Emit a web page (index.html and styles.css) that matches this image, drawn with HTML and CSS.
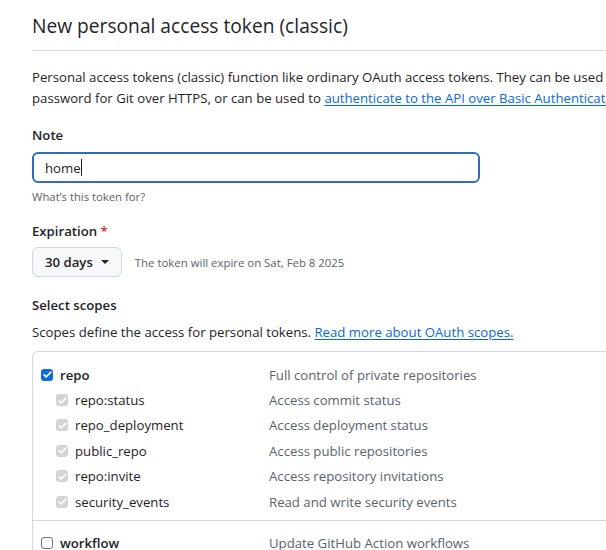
FILE: index.html
```html
<!DOCTYPE html>
<html>
<head>
<meta charset="utf-8">
<link rel="stylesheet" href="styles.css">
</head>
<body>
<div class="page">
  <div class="head">
    <h1 class="title">New personal access token (classic)</h1>
  </div>
  <p class="intro">Personal access tokens (classic) function like ordinary OAuth access tokens. They can be used instead of a<br>password for Git over HTTPS, or can be used to <a href="#" class="link">authenticate to the API over Basic Authentication</a>.</p>

  <div class="field">
    <div class="label">Note</div>
    <div class="input"><span class="value">home</span><span class="caret"></span></div>
    <div class="hint">What’s this token for?</div>
  </div>

  <div class="field">
    <div class="label">Expiration <span class="req">*</span></div>
    <div class="exp-row">
      <button class="btn">30 days <span class="tri"></span></button>
      <span class="exp-note">The token will expire on Sat, Feb 8 2025</span>
    </div>
  </div>

  <div class="label scopes-title">Select scopes</div>
  <p class="scopes-desc">Scopes define the access for personal tokens. <a href="#" class="link">Read more about OAuth scopes.</a></p>

  <div class="scopes">
    <div class="group">
      <div class="row main">
        <span class="cb cb-on"><svg viewBox="0 0 16 16" width="11" height="11"><path d="M3 8.5l3 3 7-7" fill="none" stroke="#fff" stroke-width="2.2" stroke-linecap="round" stroke-linejoin="round"/></svg></span>
        <span class="name">repo</span>
        <span class="desc">Full control of private repositories</span>
      </div>
      <div class="row sub">
        <span class="cb cb-dis"><svg viewBox="0 0 16 16" width="11" height="11"><path d="M3 8.5l3 3 7-7" fill="none" stroke="#fff" stroke-width="2.2" stroke-linecap="round" stroke-linejoin="round"/></svg></span>
        <span class="name">repo:status</span>
        <span class="desc">Access commit status</span>
      </div>
      <div class="row sub">
        <span class="cb cb-dis"><svg viewBox="0 0 16 16" width="11" height="11"><path d="M3 8.5l3 3 7-7" fill="none" stroke="#fff" stroke-width="2.2" stroke-linecap="round" stroke-linejoin="round"/></svg></span>
        <span class="name">repo_deployment</span>
        <span class="desc">Access deployment status</span>
      </div>
      <div class="row sub">
        <span class="cb cb-dis"><svg viewBox="0 0 16 16" width="11" height="11"><path d="M3 8.5l3 3 7-7" fill="none" stroke="#fff" stroke-width="2.2" stroke-linecap="round" stroke-linejoin="round"/></svg></span>
        <span class="name">public_repo</span>
        <span class="desc">Access public repositories</span>
      </div>
      <div class="row sub">
        <span class="cb cb-dis"><svg viewBox="0 0 16 16" width="11" height="11"><path d="M3 8.5l3 3 7-7" fill="none" stroke="#fff" stroke-width="2.2" stroke-linecap="round" stroke-linejoin="round"/></svg></span>
        <span class="name">repo:invite</span>
        <span class="desc">Access repository invitations</span>
      </div>
      <div class="row sub">
        <span class="cb cb-dis"><svg viewBox="0 0 16 16" width="11" height="11"><path d="M3 8.5l3 3 7-7" fill="none" stroke="#fff" stroke-width="2.2" stroke-linecap="round" stroke-linejoin="round"/></svg></span>
        <span class="name">security_events</span>
        <span class="desc">Read and write security events</span>
      </div>
    </div>
    <div class="group">
      <div class="row main">
        <span class="cb cb-off"></span>
        <span class="name">workflow</span>
        <span class="desc">Update GitHub Action workflows</span>
      </div>
    </div>
  </div>
</div>
</body>
</html>
```

FILE: styles.css
```css
html, body {
  margin: 0;
  padding: 0;
  background: #fff;
  overflow: hidden;
}
body {
  font-family: "Open Sans", "Noto Sans", sans-serif;
  font-size: 13.2px;
  color: #1f2328;
}
.page {
  width: 900px;
  padding-left: 32px;
}
.head {
  padding-top: 8px;
  border-bottom: 1px solid #d8dee4;
}
.title {
  margin: 0;
  font-size: 19.2px;
  font-weight: 400;
  line-height: 36px;
  padding-bottom: 6px;
}
.intro {
  margin: 16px 0 0;
  line-height: 21px;
  white-space: nowrap;
}
.link {
  color: #0969da;
  text-decoration: underline;
  text-underline-offset: 2px;
}
.field {
  margin-top: 16px;
}
.label {
  font-weight: 600;
  line-height: 20px;
}
.req {
  color: #d1242f;
}
.input {
  margin-top: 7px;
  width: 433px;
  height: 27px;
  border: 2px solid #2f6dbb;
  border-radius: 6px;
  display: flex;
  align-items: center;
  padding-left: 11px;
  box-sizing: content-box;
}
.caret {
  display: inline-block;
  width: 1px;
  height: 17px;
  background: #1f2328;
}
.hint {
  margin-top: 5px;
  font-size: 11.3px;
  color: #59636e;
  line-height: 18px;
}
.field + .field {
  margin-top: 15px;
}
.exp-row {
  margin-top: 6px;
  display: flex;
  align-items: center;
  gap: 13px;
}
.btn {
  font-family: inherit;
  font-size: 13.2px;
  font-weight: 600;
  color: #1f2328;
  background: #f6f8fa;
  border: 1px solid #d1d9e0;
  border-radius: 6px;
  height: 30px;
  padding: 0 12px 0 12px;
  display: flex;
  align-items: center;
  gap: 8px;
}
.tri {
  width: 0;
  height: 0;
  border-left: 4px solid transparent;
  border-right: 4px solid transparent;
  border-top: 4px solid #1f2328;
}
.exp-note {
  font-size: 11.4px;
  color: #59636e;
}
.scopes-title {
  margin-top: 18px;
}
.scopes-desc {
  margin: 7px 0 0;
  line-height: 21px;
}
.scopes {
  margin-top: 8px;
  border: 1px solid #d1d9e0;
  border-radius: 6px;
}
.group {
  padding: 10px 0 6px;
}
.group + .group {
  border-top: 1px solid #d1d9e0;
  padding-top: 9px;
}
.row {
  display: flex;
  align-items: center;
  height: 25.4px;
}
.row.main {
  padding-left: 8px;
}
.row.main .name {
  font-weight: 600;
  width: 209px;
  padding-left: 6px;
}
.row.sub {
  padding-left: 23px;
}
.row.sub .name {
  width: 194px;
  padding-left: 6px;
}
.desc {
  color: #59636e;
}
.cb {
  width: 12px;
  height: 12px;
  border-radius: 3px;
  box-sizing: border-box;
  display: flex;
  align-items: center;
  justify-content: center;
  flex: none;
  margin-right: 1px;
}
.cb-on {
  background: #0f6cd6;
}
.cb-dis {
  background: #d4d4d4;
}
.cb-off {
  border: 1px solid #6e7781;
  background: #fff;
}
```
